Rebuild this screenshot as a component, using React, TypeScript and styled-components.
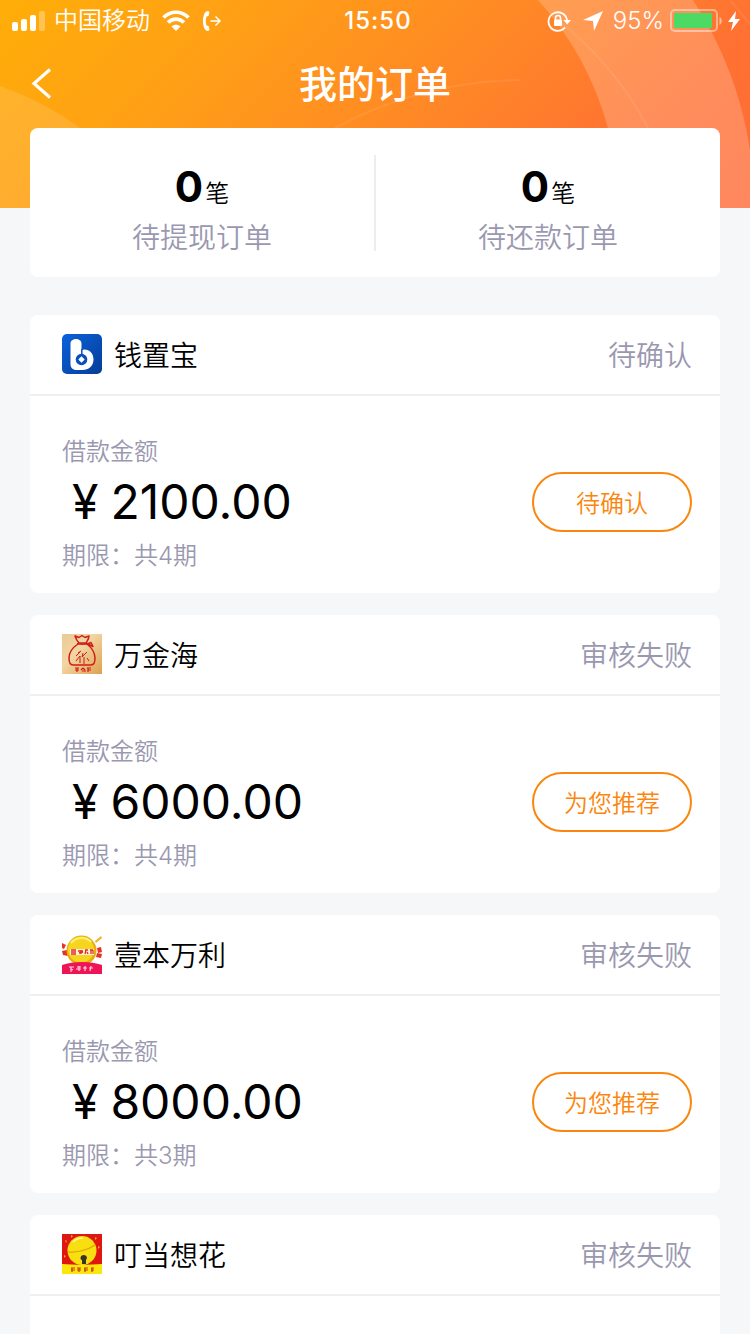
import React from "react";
import styled, { createGlobalStyle } from "styled-components";

const GlobalStyle = createGlobalStyle`
  * { box-sizing: border-box; }
  html, body { margin: 0; padding: 0; }
  body {
    background: #f6f7f9;
    color: #000;
    font-family: Inter, "Noto Sans CJK SC", sans-serif;
    font-weight: 350;
  }
`;

const muted = "#9a98b0";
const accent = "#fb860d";

const Screen = styled.div`
  height: 100vh;
  overflow-x: hidden;
  overflow-y: auto;
  scrollbar-width: none;
`;

const Header = styled.header`
  position: relative;
  padding-bottom: 80px;
  color: #fff;
  background: linear-gradient(135deg, #ffae08 0%, #ffa015 26%, #ff8b24 52%, #ff7232 80%, #ff6a38 100%);
`;

const HeaderArt = styled.svg`
  position: absolute;
  inset: 0;
  width: 100%;
  height: 100%;
`;

const StatusBar = styled.div`
  position: relative;
  display: grid;
  grid-template-columns: 1fr auto 1fr;
  align-items: center;
  height: 40px;
  padding: 2px 10px 0 12px;
  font-size: 24px;
  line-height: 38px;
`;

const StatusGroup = styled.div<{ $end?: boolean }>`
  display: flex;
  align-items: center;
  justify-content: ${(p) => (p.$end ? "flex-end" : "flex-start")};
  gap: ${(p) => (p.$end ? 6 : 8)}px;
`;

const Carrier = styled.span`
  margin-right: 4px;
`;

const Clock = styled.time`
  padding-left: 4px;
  font-weight: 500;
  letter-spacing: 1px;
`;

const Percent = styled.span`
  margin-left: 2px;
`;

const NavBar = styled.nav`
  position: relative;
  display: grid;
  grid-template-columns: 88px 1fr 88px;
  align-items: center;
  height: 88px;
`;

const BackButton = styled.button`
  display: flex;
  align-items: center;
  height: 88px;
  padding: 0 30px;
  border: 0;
  background: none;
  color: inherit;
`;

const Title = styled.h1`
  margin: 0;
  text-align: center;
  font-size: 38px;
  line-height: 88px;
  font-weight: 500;
`;

const Content = styled.main`
  position: relative;
  margin-top: -80px;
  padding: 0 30px;
`;

const Summary = styled.section`
  display: flex;
  align-items: center;
  height: 149px;
  margin-bottom: 38px;
  border-radius: 8px;
  background: #fff;
`;

const SummaryItem = styled.div`
  flex: 1;
  height: 96px;
  padding-top: 8px;
  text-align: center;
  & + & { border-left: 2px solid #ededf1; }
`;

const Count = styled.div`
  font-size: 24px;
  line-height: 48px;
`;

const CountValue = styled.strong`
  margin-right: 2px;
  font-size: 42px;
  font-weight: 700;
`;

const SummaryLabel = styled.div`
  color: ${muted};
  font-size: 28px;
  line-height: 40px;
`;

const OrderList = styled.div`
  display: flex;
  flex-direction: column;
  gap: 22px;
`;

const OrderCard = styled.article`
  border-radius: 8px;
  background: #fff;
`;

const OrderHead = styled.div`
  display: flex;
  align-items: center;
  height: 81px;
  padding: 0 28px 2px 32px;
  border-bottom: 2px solid #efeff2;
  font-size: 28px;
`;

const Shop = styled.h2`
  flex: 1;
  margin: 0 0 0 12px;
  font-size: 28px;
  font-weight: 350;
`;

const Status = styled.span`
  color: ${muted};
`;

const OrderBody = styled.div`
  min-height: 197px;
  padding: 36px 28px 17px 32px;
`;

const Note = styled.div`
  color: ${muted};
  font-size: 24px;
  line-height: 40px;
`;

const AmountRow = styled.div`
  display: flex;
  align-items: center;
  justify-content: space-between;
  height: 60px;
  margin-bottom: 4px;
`;

const Amount = styled.div`
  display: flex;
  gap: 12px;
  padding-left: 10px;
  font-size: 48px;
  line-height: 60px;
  font-weight: 400;
`;

const ActionButton = styled.button`
  width: 160px;
  height: 60px;
  padding: 0 0 2px;
  border: 2px solid ${accent};
  border-radius: 30px;
  background: #fff;
  color: ${accent};
  font-family: inherit;
  font-size: 24px;
  font-weight: 350;
`;

const CoinLogo = () => (
  <svg width="40" height="40" viewBox="0 0 40 40" aria-hidden="true">
    <defs>
      <linearGradient id="coin" x1="0" y1="0" x2="1" y2="1">
        <stop offset="0" stopColor="#0a62dc" />
        <stop offset="1" stopColor="#063d96" />
      </linearGradient>
    </defs>
    <rect width="40" height="40" rx="5" fill="url(#coin)" />
    <path d="M8.500 9.500c0-6 11-6 11 0v6.500c6-2 12 2 12 9.500 0 6.500-5 10.500-11 10.500h-6c-4 0-6-2.500-6-6z" fill="#fff" />
    <path d="M19.800 15v5" stroke="#084fb8" strokeWidth="1.500" />
    <circle cx="19.500" cy="25.500" r="5.800" fill="#0750b9" />
    <path d="m19.500 22.300 3.200 3.200-3.200 3.200-3.200-3.200z" fill="#fff" />
  </svg>
);

const BagLogo = () => (
  <svg width="40" height="40" viewBox="0 0 40 40" aria-hidden="true">
    <defs>
      <linearGradient id="bag" x1="0" y1="0" x2="1" y2="1">
        <stop offset="0" stopColor="#eac994" />
        <stop offset="0.400" stopColor="#f3d6a6" />
        <stop offset="1" stopColor="#dfa04f" />
      </linearGradient>
    </defs>
    <rect width="40" height="40" fill="url(#bag)" />
    <g fill="none" stroke="#cf1d17" strokeWidth="1.500" strokeLinejoin="round">
      <path d="M17 9c-2-2-3-4-4-7l4 1.500 3-2 3 2 4-1.500c0 3-2 5-3 7z" />
      <path d="M15 9.500c4 1 7 1 10 0l6 3-2-4-5 2M16 10c-6 4-9 9-9 14 0 4 1 7 4 7h18c3 0 4-3 4-7 0-5-3-10-8-14" />
      <path d="m14 22 4-4m-4 9 4-5v7m3-10-1 4 5-5m-3 5v7m3-6 2 3m-11-8 3-2" strokeWidth="1" />
      <path d="M13 34h4m-2 0v4m-2-2h4m3 1h4m-3-3-2 2m2-2 2 2m3-2v4m-1-4h4m-3 2h3" strokeWidth="1.200" />
    </g>
  </svg>
);

const GoldLogo = () => (
  <svg width="40" height="40" viewBox="0 0 40 40" aria-hidden="true">
    <path d="m0 9 4 2-2 4-2-1zm0 8 5-1 1 6-5-1zm35-3 4-1 1 5-4 1zM35 19l5 1-1 4-5-1z" fill="#e93226" />
    <path d="m33 7 6-5 1 2-6 5z" fill="#efb32d" />
    <circle cx="19.500" cy="16.500" r="15" fill="#e8ae0c" />
    <circle cx="19" cy="15.500" r="13" fill="#f6d51f" />
    <path d="M9 9c5-6 15-7 20-1" stroke="#fff07a" strokeWidth="2" fill="none" />
    <path d="M8 15h24v6H8z" fill="#fff3cf" />
    <path d="M9 16h5m-5 2h5m-5 2h5m2-3h5m-2-1v4m-2-1 4-1m2-2h3m-2 0-1 4m2-2 1 2m2-4h3m-2 0v4m2-4v4" stroke="#e32b35" strokeWidth="1.300" />
    <path d="M0 31c11-4 29-4 40 0v9H0z" fill="#ee1456" />
    <path d="M7 33h5m-3 0v5m0-3 2 1m4-3h4m-2-1v5m-3-2h5m4-3v5m-2-3h4m4-2-1 5m-1-3h4" stroke="#ffd6df" strokeWidth="1.200" />
  </svg>
);

const BellLogo = () => (
  <svg width="40" height="40" viewBox="0 0 40 40" aria-hidden="true">
    <rect width="40" height="40" fill="#df1710" />
    <path d="m3 6 2 1-1 2zm6-5 2 1-2 2zm24 2 2 1-2 2zm3 9 2 1-2 2zM2 21l2 1-2 2z" fill="#f8a325" />
    <path d="M0 30c12 1 28 1 40 0v10H0z" fill="#fbe80a" />
    <circle cx="20" cy="16.500" r="14.500" fill="#f9df10" />
    <path d="M6 18c8 1 20-2 27-7" fill="none" stroke="#d9a50a" strokeWidth="1.200" />
    <path d="M11 8c3-3 6-4 10-4" stroke="#fff7a0" strokeWidth="1.500" fill="none" />
    <path d="M18.500 24c0-4 6.500-4 6.500 0l-1 2v4h-4v-4c-1 0-1.500-1-1.500-2z" fill="#373527" />
    <path d="M9 34h4m-4 2h4m-3-2v4m5-4h4m-4 2h4m-2-2v4m5-4h4m-4 2h4m-3-2v4m6-4h3m-3 2h3m-2-2v4" stroke="#c8341b" strokeWidth="1.200" />
  </svg>
);

const SignalIcon = () => (
  <svg width="34" height="20" viewBox="0 0 34 20" fill="#fff" aria-hidden="true">
    <rect x="0" y="11" width="6" height="9" rx="2" />
    <rect x="9" y="8" width="6" height="12" rx="2" />
    <rect x="18" y="4" width="6" height="16" rx="2" />
    <rect x="27" y="0" width="6" height="20" rx="2" opacity="0.300" />
  </svg>
);

const WifiIcon = () => (
  <svg width="28" height="22" viewBox="0 0 28 22" fill="none" stroke="#fff" strokeWidth="3.600" aria-hidden="true">
    <path d="M1.500 7.500c7-7 18-7 25 0M6 12.500c4.500-4.500 11.500-4.500 16 0" />
    <path d="M9.500 16.500c2.500-2.500 6.500-2.500 9 0L14 21z" fill="#fff" stroke="none" />
  </svg>
);

const CallIconBox = styled.svg`
  margin-left: 4px;
`;

const CallForwardIcon = () => (
  <CallIconBox width="20" height="22" viewBox="0 0 20 22" aria-hidden="true">
    <path d="M6 1C3 1 1 5 1 11s2 10 5 10l1.500-1-1-4-2-.500c-1-3-1-6 0-9l2-.500 1-4z" fill="#fff" />
    <path d="M8.500 11h9.500m-4.500-4.500L18 11l-4.500 4.500" fill="none" stroke="#fff" strokeWidth="1.500" />
  </CallIconBox>
);

const LockIcon = () => (
  <svg width="24" height="22" viewBox="0 0 24 22" aria-hidden="true">
    <path d="M18 17.500A9.300 9.300 0 1 1 20 10" fill="none" stroke="#fff" strokeWidth="1.800" />
    <path d="M16.500 10H24l-3.800 4.500z" fill="#fff" />
    <rect x="7" y="9.500" width="8" height="6.500" rx="1" fill="#fff" />
    <path d="M8.500 10V8a2.500 2.500 0 0 1 5 0v2" fill="none" stroke="#fff" strokeWidth="1.500" />
  </svg>
);

const LocationIcon = () => (
  <svg width="28" height="22" viewBox="0 0 28 22" aria-hidden="true">
    <path d="M26 1 6 10l10 1 1 10z" fill="#fff" />
  </svg>
);

const BatteryIcon = () => (
  <svg width="52" height="24" viewBox="0 0 52 24" aria-hidden="true">
    <rect x="1" y="1" width="46" height="21" rx="4" fill="none" stroke="#fff" strokeOpacity="0.450" strokeWidth="2" />
    <rect x="4" y="4" width="38" height="15" rx="1" fill="#4cd964" />
    <path d="M49.500 8c3 1 3 6 0 8z" fill="#fff" fillOpacity="0.500" />
  </svg>
);

const BoltIcon = () => (
  <svg width="12" height="20" viewBox="0 0 12 20" aria-hidden="true">
    <path d="M8 0 0 11h5l-2 9 9-12H7z" fill="#fff" />
  </svg>
);

type Order = {
  shop: string;
  Logo: () => React.JSX.Element;
  status: string;
  amount?: string;
  term?: string;
  action?: string;
};

const orders: Order[] = [
  { shop: "钱置宝", Logo: CoinLogo, status: "待确认", amount: "2100.00", term: "共4期", action: "待确认" },
  { shop: "万金海", Logo: BagLogo, status: "审核失败", amount: "6000.00", term: "共4期", action: "为您推荐" },
  { shop: "壹本万利", Logo: GoldLogo, status: "审核失败", amount: "8000.00", term: "共3期", action: "为您推荐" },
  { shop: "叮当想花", Logo: BellLogo, status: "审核失败" },
];

const totals = [
  { count: 0, label: "待提现订单" },
  { count: 0, label: "待还款订单" },
];

export default function App() {
  return (
    <Screen>
      <GlobalStyle />
      <Header>
        <HeaderArt viewBox="0 0 750 208" preserveAspectRatio="none" aria-hidden="true">
          <path d="M538 0Q588 55 608 128T622 208H750V150Q738 70 693 0z" fill="#fff" fillOpacity="0.200" />
          <path d="M0 86Q45 102 80 128T150 208H0z" fill="#fff" fillOpacity="0.120" />
          <g fill="none" stroke="#fff" strokeOpacity="0.080" strokeWidth="2">
            <path d="M560 22Q615 65 648 128" />
            <path d="M335 128Q420 82 520 80" />
            <path d="M730 0l20 24" />
          </g>
        </HeaderArt>
        <StatusBar>
          <StatusGroup>
            <SignalIcon />
            <Carrier>中国移动</Carrier>
            <WifiIcon />
            <CallForwardIcon />
          </StatusGroup>
          <Clock>15:50</Clock>
          <StatusGroup $end>
            <LockIcon />
            <LocationIcon />
            <Percent>95%</Percent>
            <BatteryIcon />
            <BoltIcon />
          </StatusGroup>
        </StatusBar>
        <NavBar>
          <BackButton type="button" aria-label="返回">
            <svg width="22" height="32" viewBox="0 0 22 32" fill="none" stroke="#fff" strokeWidth="3.200">
              <path d="M20 1.500 4 15.500l16 14" />
            </svg>
          </BackButton>
          <Title>我的订单</Title>
        </NavBar>
      </Header>
      <Content>
        <Summary>
          {totals.map((t) => (
            <SummaryItem key={t.label}>
              <Count>
                <CountValue>{t.count}</CountValue>笔
              </Count>
              <SummaryLabel>{t.label}</SummaryLabel>
            </SummaryItem>
          ))}
        </Summary>
        <OrderList>
          {orders.map(({ shop, Logo, status, amount, term, action }) => (
            <OrderCard key={shop}>
              <OrderHead>
                <Logo />
                <Shop>{shop}</Shop>
                <Status>{status}</Status>
              </OrderHead>
              <OrderBody>
                {amount && (
                  <>
                    <Note>借款金额</Note>
                    <AmountRow>
                      <Amount>
                        <span>¥</span>
                        <span>{amount}</span>
                      </Amount>
                      <ActionButton type="button">{action}</ActionButton>
                    </AmountRow>
                    <Note>期限：{term}</Note>
                  </>
                )}
              </OrderBody>
            </OrderCard>
          ))}
        </OrderList>
      </Content>
    </Screen>
  );
}
